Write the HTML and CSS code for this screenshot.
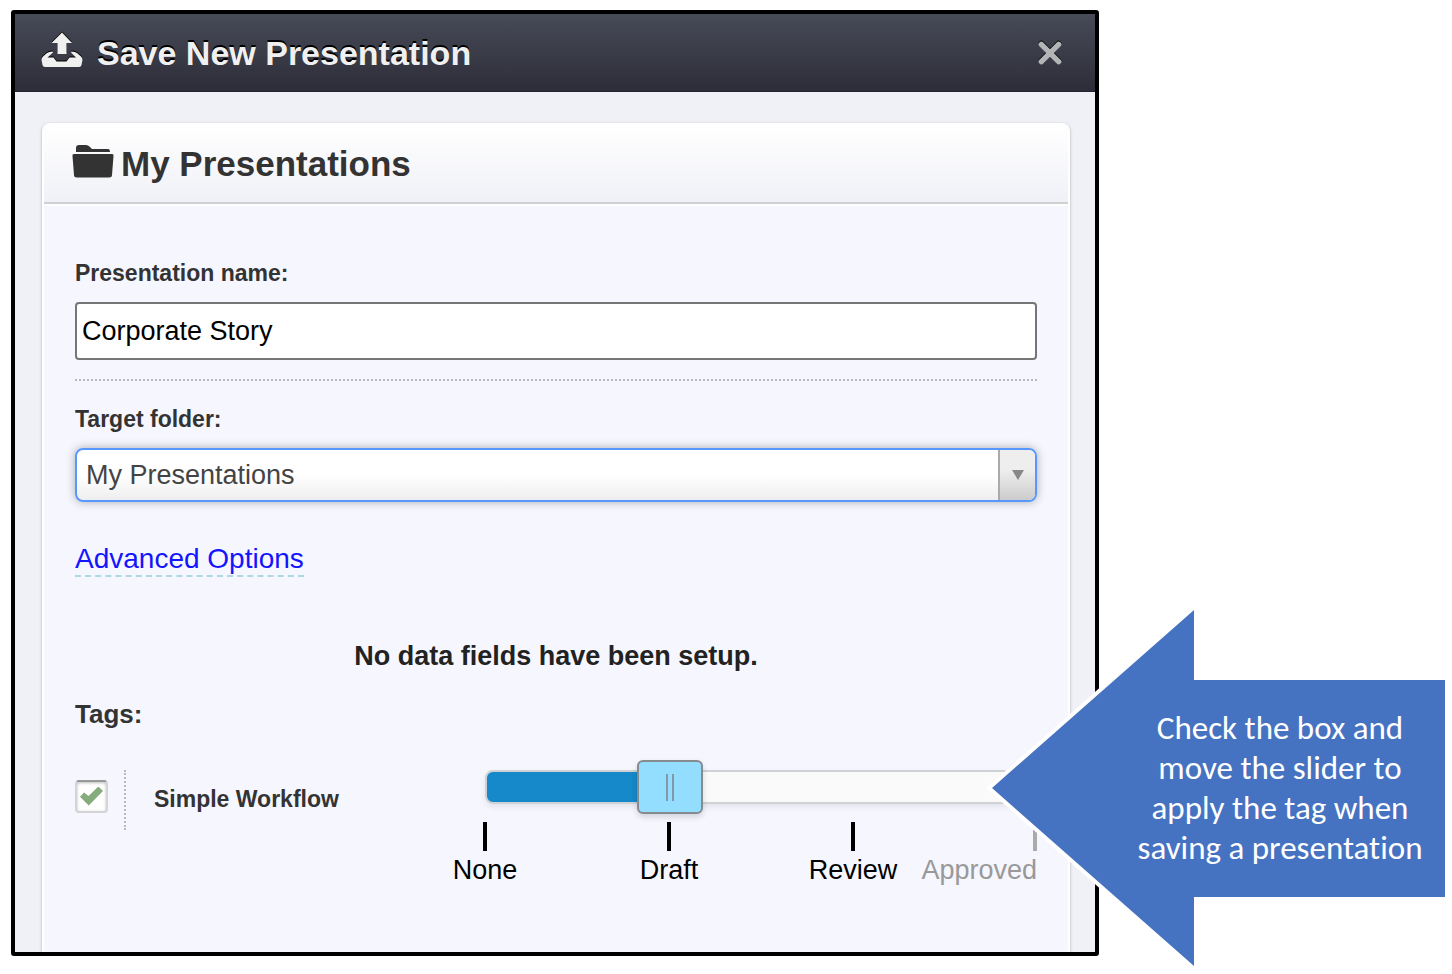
FILE: index.html
```html
<!DOCTYPE html>
<html lang="en">
<head>
<meta charset="utf-8">
<title>Save New Presentation</title>
<link rel="stylesheet" href="styles.css">
</head>
<body>
<main class="stage">
  <section class="dialog" aria-labelledby="dialog-title">
    <header class="dialog-header">
      <svg class="icon-save" viewBox="0 0 42 36" aria-hidden="true">
        <path d="M21 0.500 31 11H25.500V22H16.500V11H10.500Z"/>
        <path d="M11.500 19.500Q8 19.500 6 21L2 24.500Q.3 26 .5 28L1.500 33Q2 35 4 35H38Q40 35 40.500 33L41.500 28Q41.700 26 40 24.500L36 21Q34 19.500 30.500 19.500L30 20.500 35 25.500H28.500L25.500 29.500H15.500L12.500 25.500H6.500L12 20.500Z"/>
      </svg>
      <h1 class="dialog-title" id="dialog-title">Save New Presentation</h1>
      <button class="close" type="button" aria-label="Close">
        <svg class="icon-close" viewBox="0 0 24 24" aria-hidden="true"><path d="M4 4 20 20M20 4 4 20"/></svg>
      </button>
    </header>
    <form class="dialog-body">
      <div class="panel">
        <header class="panel-header">
          <svg class="icon-folder" viewBox="0 0 42 34" aria-hidden="true">
            <path d="M4 8V4Q4 1 7 1H14Q16 1 18 3L20 5H36Q38 5 38 8Z"/>
            <path d="M2 10H40Q42 10 41.500 12L40 31Q40 33.500 37 33.500H5Q2 33.500 2 31L.500 12Q0 10 2 10Z"/>
          </svg>
          <h2 class="panel-title">My Presentations</h2>
        </header>
        <div class="panel-content">
          <div class="field field-name">
            <label class="label" for="name">Presentation name:</label>
            <input class="text-input" id="name" type="text" value="Corporate Story">
          </div>
          <div class="field">
            <label class="label" for="folder">Target folder:</label>
            <div class="select-wrap">
              <select class="select" id="folder"><option>My Presentations</option></select>
              <span class="select-arrow" aria-hidden="true"></span>
            </div>
          </div>
          <a class="advanced" href="#">Advanced Options</a>
          <p class="empty">No data fields have been setup.</p>
          <h3 class="tags-title">Tags:</h3>
          <div class="tag-row">
            <div class="check-cell"><input class="check" id="workflow" type="checkbox" checked></div>
            <label class="tag-label" for="workflow">Simple Workflow</label>
            <div class="slider">
              <div class="rail">
                <input class="range" type="range" min="0" max="3" step="1" value="1" aria-label="Workflow stage">
              </div>
              <div class="ticks">
                <span class="tick">None</span>
                <span class="tick">Draft</span>
                <span class="tick">Review</span>
                <span class="tick tick-last">Approved</span>
              </div>
            </div>
          </div>
        </div>
      </div>
    </form>
  </section>
  <aside class="callout">
    <svg class="callout-shape" viewBox="0 0 453 358" preserveAspectRatio="none" aria-hidden="true">
      <path d="M0 179 202 1V71H453V288H202V357Z"/>
    </svg>
    <p class="callout-text">Check the box and move the slider to apply the tag when saving a presentation</p>
  </aside>
</main>
</body>
</html>
```
FILE: styles.css
```css
* { box-sizing: border-box; }

body {
  margin: 0;
  background: #fff;
  color: #333;
  font-family: "Liberation Sans", Arial, sans-serif;
  font-size: 27px;
}

h1, h2, h3, p { margin: 0; }

.stage {
  position: relative;
  min-height: 100vh;
  padding: 10px 353px 18px 11px;
  display: flex;
}

.dialog {
  flex: 1;
  display: flex;
  flex-direction: column;
  border: 4px solid #000;
  border-radius: 3px;
  background: #f0f1f7;
}

.dialog-header {
  display: flex;
  align-items: center;
  height: 78px;
  padding: 0 32px 0 26px;
  background: linear-gradient(#474b57, #2d2d39);
  border-bottom: 1px solid #23232d;
}

.icon-save {
  width: 42px;
  height: 36px;
  margin: 0 14px 5px 0;
  fill: #f0f0f0;
  filter: drop-shadow(0 -1px 0 #000);
}

.dialog-title {
  flex: 1;
  color: #f0f0f0;
  font-size: 34px;
  line-height: 40px;
  text-shadow: 0 -2px 0 #000;
}

.close {
  display: flex;
  padding: 0;
  border: 0;
  background: none;
}

.icon-close {
  width: 26px;
  height: 26px;
  fill: none;
  stroke: #b3b4b6;
  stroke-width: 5;
  stroke-linecap: round;
  filter: drop-shadow(0 -1px 0 #000);
}

.dialog-body {
  flex: 1;
  display: flex;
  padding: 31px 25px 0 27px;
}

.panel {
  flex: 1;
  border: 2px solid #fff;
  border-bottom: 0;
  border-radius: 8px 8px 0 0;
  background: #f5f6fe;
  box-shadow: 0 1px 3px #aaa;
  clip-path: inset(-4px -4px 0 -4px);
}

.panel-header {
  display: flex;
  align-items: center;
  gap: 7px;
  height: 79px;
  padding: 0 28px;
  border-bottom: 2px solid #cfd0d5;
  border-radius: 6px 6px 0 0;
  background: linear-gradient(#fff, #f0f1f7);
  box-shadow: 0 2px 0 #fff;
}

.icon-folder {
  width: 42px;
  height: 34px;
  margin-bottom: 6px;
  fill: #333;
}

.panel-title {
  font-size: 35px;
  line-height: 40px;
}

.panel-content { padding: 54px 31px 0; }

.field { display: flex; flex-direction: column; }

.field-name {
  padding-bottom: 19px;
  margin-bottom: 23px;
  border-bottom: 2px dotted #b9bac0;
}

.label {
  margin-bottom: 14px;
  font-size: 23px;
  font-weight: bold;
  line-height: 30px;
}

.text-input {
  width: 100%;
  height: 58px;
  padding: 0 5px;
  border: 2px solid #767676;
  border-radius: 4px;
  background: #fff;
  color: #000;
  font: inherit;
}

.select-wrap { position: relative; }

.select {
  appearance: none;
  display: block;
  width: 100%;
  height: 54px;
  padding: 0 48px 0 9px;
  border: 2px solid #5897fb;
  border-radius: 8px;
  background: linear-gradient(#fff 50%, #eee);
  box-shadow: 0 0 10px rgba(0, 0, 0, .3);
  color: #444;
  font: inherit;
}

.select-arrow {
  position: absolute;
  inset: 2px 2px 2px auto;
  width: 37px;
  display: grid;
  place-items: center;
  border-left: 2px solid #aaa;
  border-radius: 0 6px 6px 0;
  background: linear-gradient(#eee 40%, #ccc);
  pointer-events: none;
}

.select-arrow::after {
  content: "";
  border: 6px solid transparent;
  border-top: 10px solid #888;
  border-bottom: 0;
}

.advanced {
  display: inline-block;
  margin-top: 41px;
  border-bottom: 2px dashed #add8e6;
  color: #1414ff;
  font-size: 28px;
  line-height: 32px;
  text-decoration: none;
}

.empty {
  margin-top: 63px;
  color: #222;
  font-weight: bold;
  line-height: 32px;
  text-align: center;
}

.tags-title {
  margin-top: 26px;
  font-size: 26px;
  line-height: 32px;
}

.tag-row {
  display: grid;
  grid-template-columns: 51px 359px 1fr;
  align-items: start;
  margin-top: 30px;
}

.check-cell {
  display: flex;
  align-items: center;
  height: 60px;
  margin-top: 10px;
  padding-bottom: 8px;
  border-right: 2px dotted #b9bac0;
}

.check {
  appearance: none;
  width: 33px;
  height: 33px;
  margin: 0;
  display: grid;
  place-items: center;
  border: 2px solid #d4d4d8;
  border-top-color: #999;
  border-radius: 4px;
  background: #fff;
  box-shadow: inset 0 1px 3px #bbb;
}

.check:checked::before {
  content: "";
  width: 23px;
  height: 19px;
  background: #86ac7b;
  clip-path: polygon(0 54%, 18% 32%, 37% 50%, 80% 0, 100% 24%, 38% 100%);
}

.tag-label {
  margin-top: 23px;
  padding-left: 28px;
  font-size: 23px;
  font-weight: bold;
  line-height: 32px;
}

/* The thumb's travel runs from one end of the rail to the other, so the
   range input overhangs the rail by half a thumb on each side. */
.rail {
  display: flex;
  justify-content: center;
  align-items: center;
  height: 34px;
  margin-top: 10px;
  border: 2px solid #d0d1d4;
  border-radius: 8px;
  background: linear-gradient(to right, #1589c9 33%, #fafafa 33%);
  box-shadow: 0 3px 6px rgba(0, 0, 0, .08);
}

.range {
  appearance: none;
  flex: none;
  width: calc(100% + 66px);
  height: 54px;
  margin: 0;
  background: none;
}

.range::-webkit-slider-thumb {
  appearance: none;
  width: 66px;
  height: 54px;
  border: 2px solid #858b8f;
  border-radius: 6px;
  background:
    linear-gradient(#7f9aa6, #7f9aa6) 27px 12px / 2px 27px no-repeat,
    linear-gradient(#7f9aa6, #7f9aa6) 33px 12px / 2px 27px no-repeat,
    #93defe;
  box-shadow: 0 3px 6px rgba(0, 0, 0, .15);
}

.ticks {
  display: grid;
  grid-template-columns: repeat(3, 1fr) 0;
  margin-top: 18px;
}

.tick {
  display: flex;
  flex-direction: column;
  align-items: center;
  width: 0;
  color: #000;
  line-height: 32px;
  white-space: nowrap;
}

.tick::before {
  content: "";
  width: 4px;
  height: 29px;
  margin-bottom: 3px;
  background: #000;
}

.tick-last {
  align-items: flex-end;
  color: #999;
}

.tick-last::before { background: #aaa; }

.callout {
  position: absolute;
  right: 7px;
  top: 609px;
  width: 453px;
  height: 358px;
  display: flex;
  align-items: center;
  justify-content: flex-end;
  padding-right: 15px;
}

.callout-shape {
  position: absolute;
  inset: 0;
  width: 100%;
  height: 100%;
  overflow: visible;
  fill: #4673c1;
  stroke: #fff;
  stroke-width: 8;
  paint-order: stroke;
}

.callout-text {
  position: relative;
  width: 300px;
  color: #fff;
  font-family: Carlito, Lato, "Open Sans", sans-serif;
  font-size: 33px;
  font-variant-ligatures: none;
  line-height: 40px;
  text-align: center;
}
```
